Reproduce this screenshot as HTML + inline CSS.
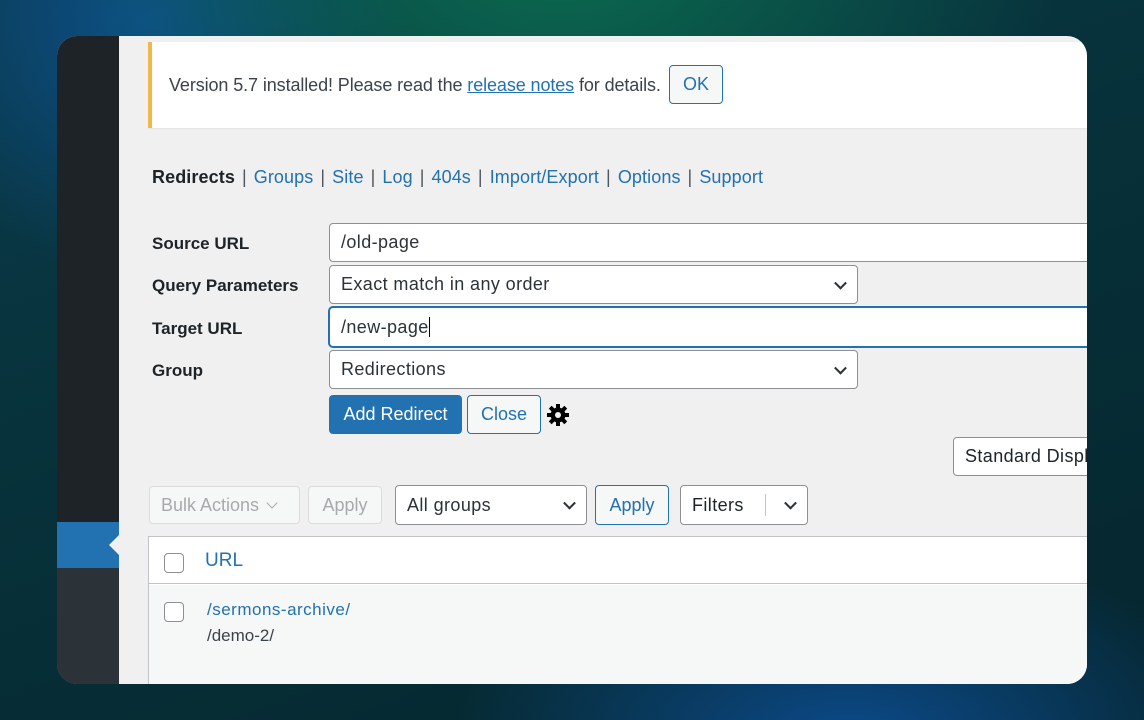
<!DOCTYPE html>
<html><head><style>
*{box-sizing:border-box;margin:0;padding:0}
body{width:1144px;height:720px;overflow:hidden;position:relative;font-family:"Liberation Sans",sans-serif;
background:radial-gradient(ellipse 500px 300px at 560px -40px,#0b6a4e 0%,rgba(11,90,70,0) 100%),
radial-gradient(ellipse 260px 260px at 150px 20px,#0d4f8a 0%,rgba(13,79,138,0) 100%),
radial-gradient(ellipse 400px 200px at 850px 740px,#0c4a8a 0%,rgba(12,74,138,0) 100%),
linear-gradient(160deg,#0a3a4a 0%,#07323b 40%,#05252d 100%);}
.card{position:absolute;left:57px;top:36px;width:1030px;height:648px;border-radius:20px;overflow:hidden;background:#f0f0f1}
.side{position:absolute;left:0;top:0;width:62px;height:100%;background:#1d2327}
.side .lo{position:absolute;top:532px;left:0;width:62px;bottom:0;background:#2c3338}
.side .act{position:absolute;top:486px;left:0;width:62px;height:46px;background:#2271b1}
.side .arr{position:absolute;top:499px;left:52px;width:0;height:0;border-top:10px solid transparent;border-bottom:10px solid transparent;border-right:10px solid #f0f0f1}
.abs{position:absolute}
.notice{left:91px;top:6px;width:950px;height:86px;background:#fff;border-left:4px solid #f0b849;box-shadow:0 1px 1px rgba(0,0,0,.05)}
.txt{font-size:18px;color:#3c434a;white-space:nowrap;letter-spacing:-0.1px}
a{color:#2271b1}
.nav{left:95px;top:131px;font-size:18px;color:#2271b1;white-space:nowrap;letter-spacing:0.1px}
.nav b{color:#1d2327}
.nav .s{color:#50575e;margin:0 7px}
.lbl{font-size:17px;font-weight:bold;color:#1d2327;left:95px}
.inp{background:#fff;border:1px solid #8c8f94;border-radius:4px;font-size:18px;color:#2c3338;padding:0 11px;display:flex;align-items:center;white-space:nowrap;overflow:hidden;letter-spacing:0.4px}
.chev{position:absolute;right:12px;top:50%;width:9px;height:9px;border-right:2px solid #2c3338;border-bottom:2px solid #2c3338;transform:translateY(-70%) rotate(45deg)}
.btn{border-radius:4px;font-size:18px;display:flex;align-items:center;justify-content:center;white-space:nowrap}
</style></head><body>
<div class="card">
 <div class="side"><div class="lo"></div><div class="act"></div><div class="arr"></div></div>
 <div class="abs notice">
  <div class="abs txt" style="left:17px;top:33px;">Version 5.7 installed! Please read the <a style="text-decoration:underline">release notes</a> for details.</div>
  <div class="abs btn" style="left:517px;top:23px;width:54px;height:39px;border:1px solid #2271b1;background:#f6f7f7;color:#2271b1">OK</div>
 </div>
 <div class="abs nav"><b>Redirects</b><span class="s">|</span>Groups<span class="s">|</span>Site<span class="s">|</span>Log<span class="s">|</span>404s<span class="s">|</span>Import/Export<span class="s">|</span>Options<span class="s">|</span>Support</div>
 <div class="abs lbl" style="top:198px">Source URL</div>
 <div class="abs lbl" style="top:240px">Query Parameters</div>
 <div class="abs lbl" style="top:283px">Target URL</div>
 <div class="abs lbl" style="top:325px">Group</div>
 <div class="abs inp" style="left:272px;top:187px;width:780px;height:39px">/old-page</div>
 <div class="abs inp" style="left:272px;top:229px;width:529px;height:39px">Exact match in any order<span class="chev"></span></div>
 <div class="abs inp" style="left:272px;top:271px;width:780px;height:40px;border-color:#2271b1;box-shadow:0 0 0 1px #2271b1">/new-page<span style="display:inline-block;width:1px;height:20px;background:#000"></span></div>
 <div class="abs inp" style="left:272px;top:314px;width:529px;height:39px">Redirections<span class="chev"></span></div>
 <div class="abs btn" style="left:272px;top:359px;width:133px;height:39px;background:#2271b1;color:#fff">Add Redirect</div>
 <div class="abs btn" style="left:410px;top:359px;width:74px;height:39px;border:1px solid #2271b1;background:#f6f7f7;color:#2271b1">Close</div>
 <svg class="abs" style="left:489px;top:367px" width="24" height="24" viewBox="0 0 24 24"><g fill="#000"><circle cx="12" cy="12" r="7.5"/><g id="t"><rect x="10" y="1" width="4" height="6"/></g><use href="#t" transform="rotate(45 12 12)"/><use href="#t" transform="rotate(90 12 12)"/><use href="#t" transform="rotate(135 12 12)"/><use href="#t" transform="rotate(180 12 12)"/><use href="#t" transform="rotate(225 12 12)"/><use href="#t" transform="rotate(270 12 12)"/><use href="#t" transform="rotate(315 12 12)"/></g><circle cx="12" cy="12" r="3" fill="#f0f0f1"/></svg>
 <div class="abs inp" style="left:896px;top:401px;width:160px;height:39px;border-color:#8c8f94;color:#1d2327">Standard Display</div>
 <div class="abs btn" style="left:92px;top:450px;width:151px;height:38px;border:1px solid #dcdcde;background:#f6f7f7;color:#a7aaad;justify-content:flex-start;padding-left:11px">Bulk Actions<span style="display:inline-block;width:8px;height:8px;border-right:1.5px solid #a7aaad;border-bottom:1.5px solid #a7aaad;transform:rotate(45deg);margin:-5px 0 0 9px"></span></div>
 <div class="abs btn" style="left:251px;top:450px;width:74px;height:38px;border:1px solid #dcdcde;background:#f6f7f7;color:#a7aaad">Apply</div>
 <div class="abs inp" style="left:338px;top:449px;width:192px;height:40px">All groups<span class="chev"></span></div>
 <div class="abs btn" style="left:538px;top:449px;width:74px;height:40px;border:1px solid #2271b1;background:#f6f7f7;color:#2271b1">Apply</div>
 <div class="abs inp" style="left:623px;top:449px;width:128px;height:40px;color:#1d2327">Filters<span style="position:absolute;left:84px;top:8px;width:1px;height:22px;background:#c3c4c7"></span><span class="chev"></span></div>
 <div class="abs" style="left:91px;top:500px;width:950px;height:160px;background:#fff;border:1px solid #c3c4c7"></div>
 <div class="abs" style="left:92px;top:501px;width:950px;height:47px;background:#fff;border-bottom:1px solid #c3c4c7"></div>
 <div class="abs" style="left:107px;top:517px;width:20px;height:20px;border:1px solid #8c8f94;border-radius:4px;background:#fff"></div>
 <div class="abs" style="left:148px;top:514px;font-size:19px;color:#2271b1">URL</div>
 <div class="abs" style="left:92px;top:549px;width:950px;height:110px;background:#f6f7f7"></div>
 <div class="abs" style="left:107px;top:566px;width:20px;height:20px;border:1px solid #8c8f94;border-radius:4px;background:#fff"></div>
 <div class="abs" style="left:150px;top:564px;font-size:17px;color:#2271b1;letter-spacing:0.5px">/sermons-archive/</div>
 <div class="abs" style="left:150px;top:590px;font-size:17px;color:#3c434a">/demo-2/</div>
</div>
</body></html>
